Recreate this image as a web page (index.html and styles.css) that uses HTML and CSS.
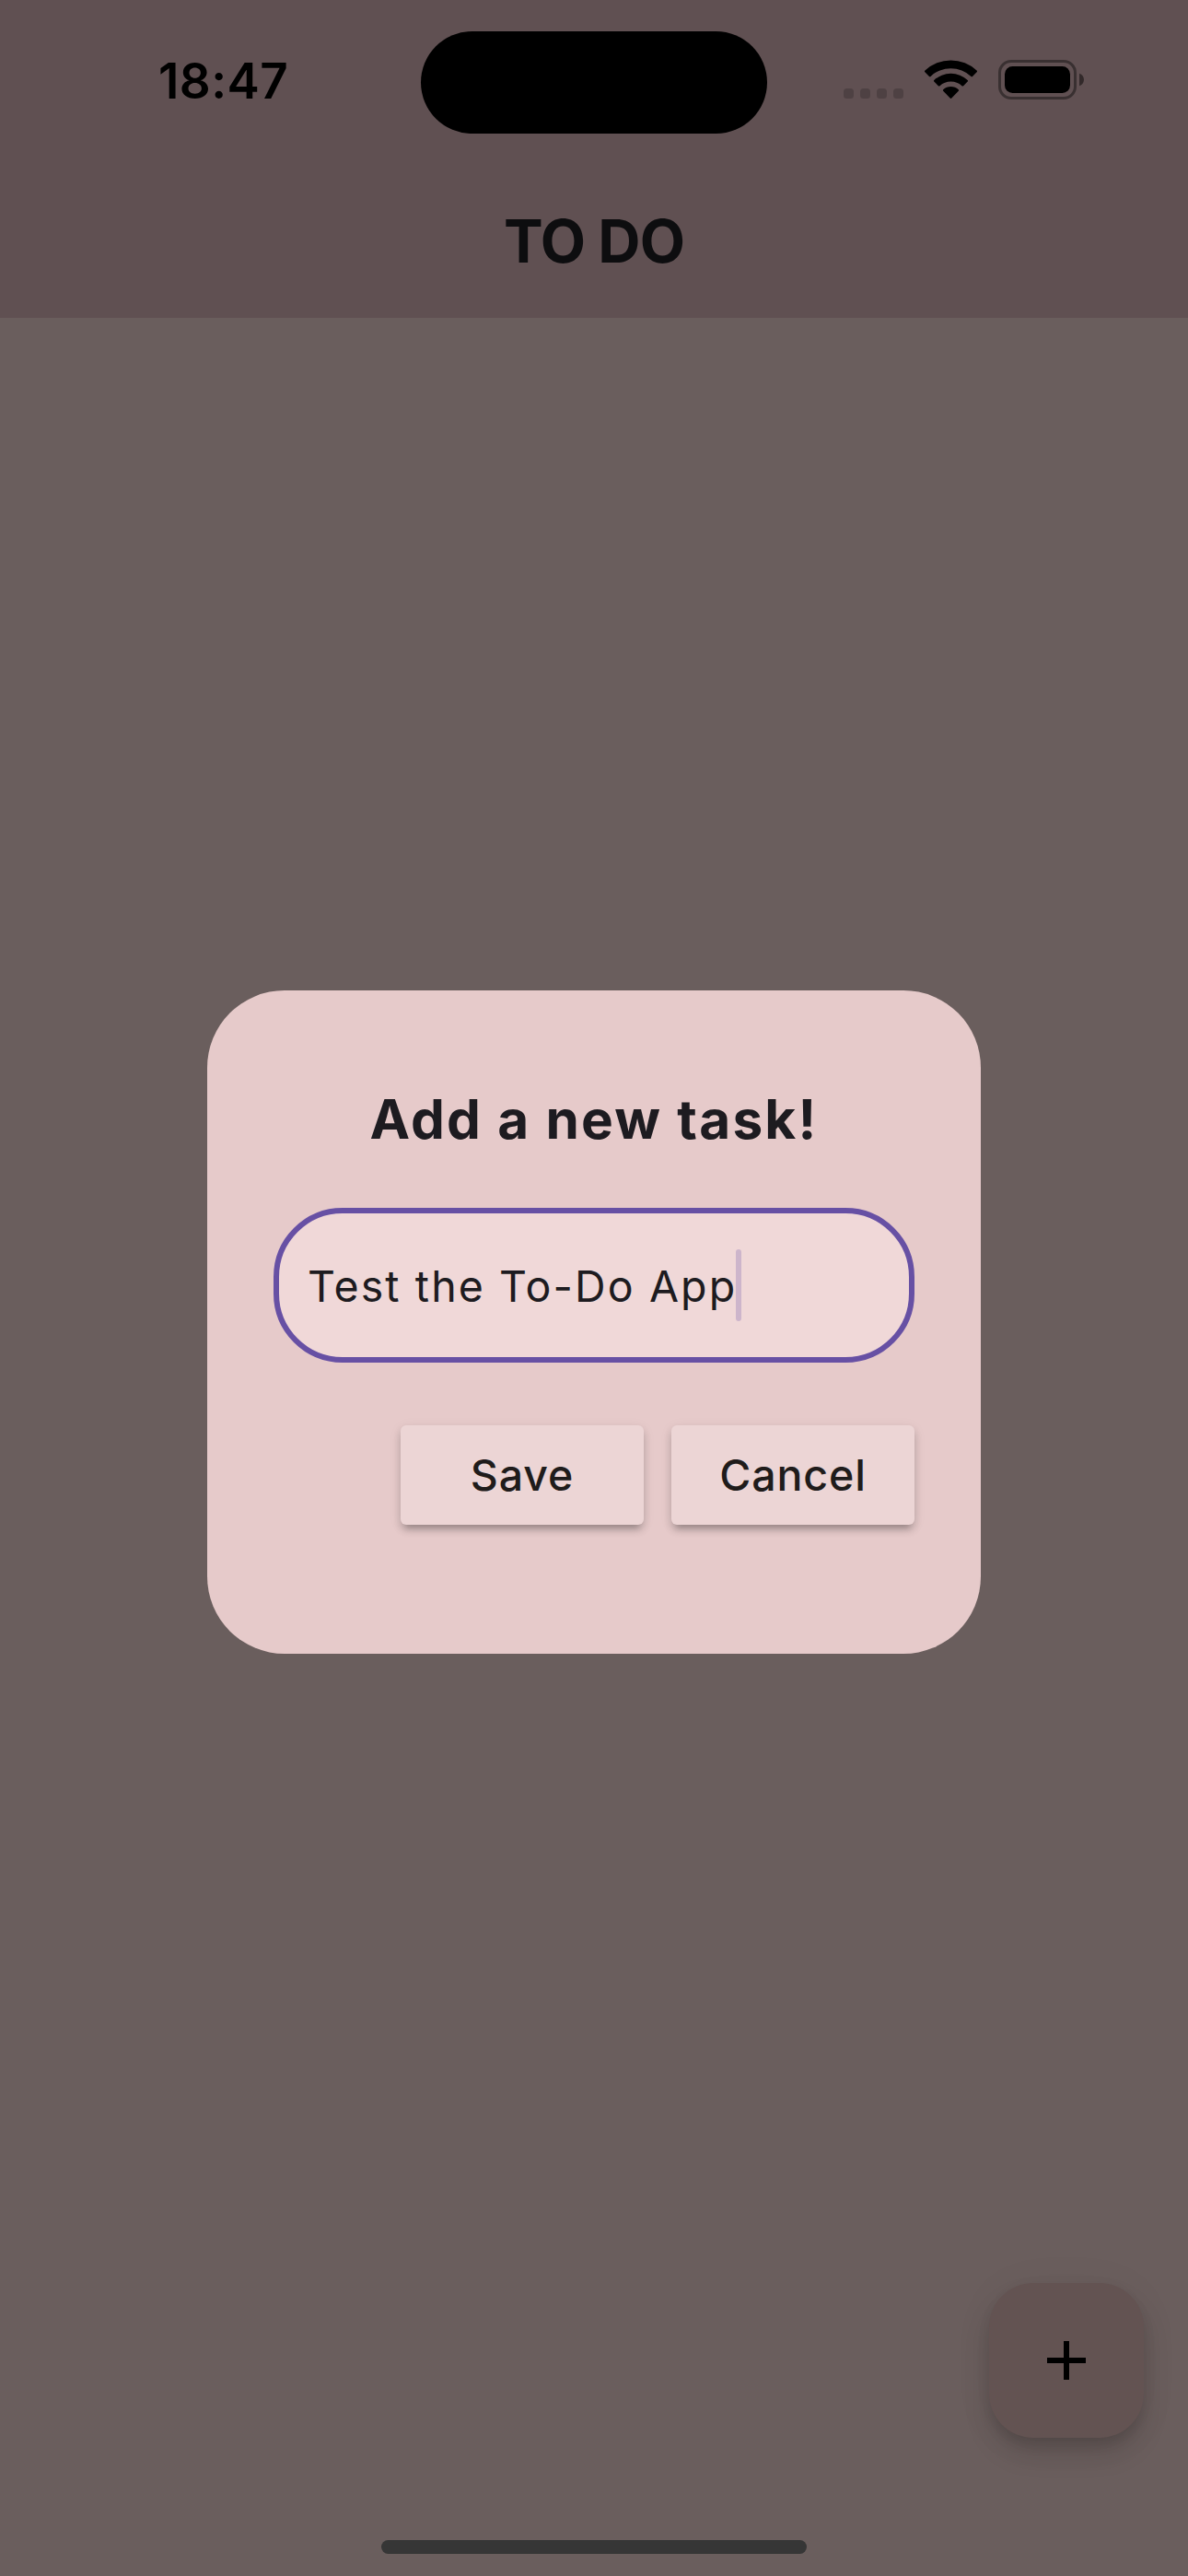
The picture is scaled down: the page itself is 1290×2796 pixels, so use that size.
FILE: index.html
```html
<!DOCTYPE html>
<html lang="en">
<head>
<meta charset="utf-8">
<title>To Do</title>
<link rel="stylesheet" href="styles.css">
</head>
<body>
<div class="screen">
  <header class="top-bar">
    <div class="status-bar">
      <div class="status-left"><span class="time">18:47</span></div>
      <div class="island"></div>
      <div class="status-right">
        <svg class="status-icons" width="264" height="48" viewBox="914 62 264 48">
          <g fill="#000" fill-opacity=".18">
            <rect x="916" y="96" width="11" height="11" rx="3.5"/>
            <rect x="934" y="96" width="11" height="11" rx="3.5"/>
            <rect x="952" y="96" width="11" height="11" rx="3.5"/>
            <rect x="970" y="96" width="11" height="11" rx="3.5"/>
          </g>
          <path d="M1004.4 78.2Q1003.6 77.4 1004.4 76.6A41 41 0 0 1 1060.6 76.6Q1061.4 77.4 1060.6 78.2L1056 82.9Q1055.300 83.6 1054.500 82.9A32 32 0 0 0 1010.500 82.9Q1009.700 83.6 1009 82.9Z"/>
          <path d="M1014.300 88.6Q1013.500 87.8 1014.300 87A26.500 26.500 0 0 1 1050.700 87Q1051.500 87.8 1050.700 88.6L1046.100 93.2Q1045.300 94 1044.500 93.2A17.800 17.800 0 0 0 1020.500 93.200Q1019.700 94 1018.900 93.200Z"/>
          <path d="M1024.200 98.8Q1023.400 98 1024.200 97.200A12.300 12.300 0 0 1 1040.800 97.200Q1041.600 98 1040.800 98.800L1033.300 106.500Q1032.500 107.300 1031.700 106.500Z"/>
          <rect x="1085.500" y="66.500" width="82" height="40" rx="12.500" fill="none" stroke="#000" stroke-opacity=".4" stroke-width="3"/>
          <rect x="1091" y="72" width="71" height="29" rx="8.500"/>
          <path d="M1172 79.800C1175 80.600 1177 83.200 1177 86.500S1175 92.400 1172 93.200Z" fill-opacity=".48"/>
        </svg>
      </div>
    </div>
    <h1 class="title">TO DO</h1>
  </header>
  <main class="content">
    <section class="dialog">
      <h2 class="dialog-title">Add a new task!</h2>
      <div class="field"><span class="field-text">Test the To-Do App</span><span class="caret"></span></div>
      <div class="actions">
        <div class="button save">Save</div>
        <div class="button cancel">Cancel</div>
      </div>
    </section>
  </main>
  <footer class="bottom">
    <div class="fab">
      <svg width="42" height="42" viewBox="0 0 42 42"><path d="M18 0h6v18h18v6H24v18h-6V24H0v-6h18z"/></svg>
    </div>
    <div class="home"></div>
  </footer>
</div>
</body>
</html>
```
FILE: styles.css
```css
* { box-sizing: border-box; }
body { margin: 0; font-family: Inter, "Liberation Sans", sans-serif; }
.screen {
  width: 1290px;
  height: 2796px;
  display: flex;
  flex-direction: column;
  background: #6a5e5d;
  overflow: hidden;
}
.top-bar {
  height: 345px;
  flex: none;
  background: #605052;
}
.status-bar {
  height: 178px;
  display: grid;
  grid-template-columns: 457px 376px 457px;
  align-items: start;
}
.status-left { padding: 56px 0 0 172px; }
.time {
  display: block;
  font-size: 53px;
  line-height: 64px;
  font-weight: 600;
  letter-spacing: 0.4px;
  white-space: nowrap;
}
.island {
  height: 111px;
  margin-top: 33.5px;
  border-radius: 56px;
  background: #000;
}
.status-right { padding: 62px 0 0 81px; }
.status-icons { display: block; }
.title {
  margin: 0;
  padding-top: 44px;
  font-size: 64px;
  line-height: 80px;
  font-weight: 700;
  letter-spacing: -0.9px;
  text-align: center;
  color: #0d0d0f;
}
.content {
  flex: 1;
  padding: 730.3px 225px 0;
}
.dialog {
  height: 720px;
  padding: 100px 72px 0;
  border-radius: 84px;
  background: #e6caca;
}
.dialog-title {
  margin: 0;
  font-size: 58.5px;
  line-height: 80px;
  font-weight: 700;
  letter-spacing: 2.2px;
  text-align: center;
  white-space: nowrap;
  color: #1d1b20;
}
.field {
  height: 168px;
  margin-top: 55.7px;
  padding-left: 31px;
  display: flex;
  align-items: center;
  border: 6px solid #6750a4;
  border-radius: 75px;
  background: #f0d8d8;
}
.field-text {
  width: 465px;
  padding-top: 2px;
  font-size: 46.5px;
  line-height: 72px;
  font-weight: 400;
  letter-spacing: 2.1px;
  white-space: nowrap;
  color: #1d1b20;
}
.caret {
  width: 6px;
  height: 78px;
  border-radius: 3px;
  background: #cdb5cb;
}
.actions {
  display: flex;
  justify-content: flex-end;
  gap: 30px;
  margin-top: 68px;
}
.button {
  width: 264px;
  height: 108px;
  border-radius: 6px;
  background: #ecd5d5;
  box-shadow: 0 9px 6px -6px rgba(0,0,0,.17), 0 6px 8px rgba(0,0,0,.16), 0 3px 14px rgba(0,0,0,.08);
  font-size: 46.5px;
  line-height: 108px;
  font-weight: 500;
  letter-spacing: 0.9px;
  text-align: center;
  color: #1f1c1b;
}
.bottom {
  height: 318.5px;
  flex: none;
  display: flex;
  flex-direction: column;
  align-items: center;
}
.fab {
  width: 168px;
  height: 168px;
  margin-right: 48px;
  align-self: flex-end;
  display: flex;
  align-items: center;
  justify-content: center;
  border-radius: 48px;
  background: #635352;
  box-shadow: 0 9px 15px -3px rgba(0,0,0,.13), 0 18px 30px rgba(0,0,0,.11), 0 3px 50px rgba(0,0,0,.04);
}
.home {
  width: 462px;
  height: 15px;
  margin-top: 111.5px;
  border-radius: 8px;
  background: #363636;
}
```
